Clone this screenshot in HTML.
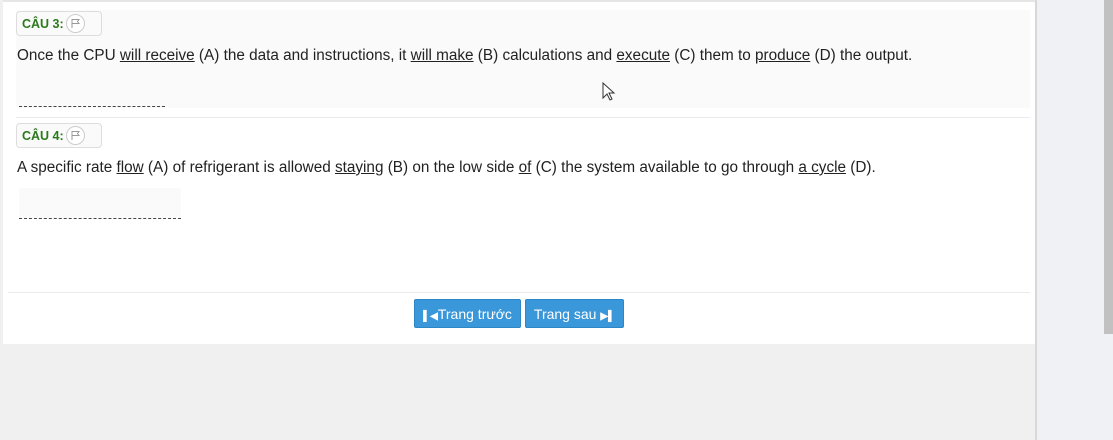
<!DOCTYPE html>
<html><head><meta charset="utf-8"><style>
*{margin:0;padding:0;box-sizing:border-box}
body{width:1113px;height:440px;background:#f0f0f0;font-family:"Liberation Sans",Arial,sans-serif;position:relative;overflow:hidden}
.gut{position:absolute;left:1035px;top:0;width:78px;height:440px;background:#f0f1f4;border-left:2px solid #d8d8d8}
.sb{position:absolute;left:1104px;top:0;width:9px;height:334px;background:#c1c1c1}
.panel{position:absolute;left:3px;top:0;width:1032px;height:344px;background:#fff;border-top:2px solid #e6e6e6}
.abs{position:absolute}
.badge{position:absolute;left:16px;width:86px;height:25px;border:1px solid #ddd;border-radius:4px;background:#fafafa;font:bold 12.5px "Liberation Sans",sans-serif;color:#2a7a1a;padding:5px 0 0 5px}
.flag{position:absolute;left:49px;top:2px;width:19px;height:19px;border:1px solid #ccc;border-radius:50%;background:#fff}
.txt{position:absolute;left:17px;font-size:15.3px;color:#222;white-space:nowrap}
.dash{position:absolute;height:1px;border-top:1px dashed #444}
.btn{position:absolute;top:299px;height:29px;background:#3a97d9;border:1px solid #2d86c6;border-radius:2px;color:#fff;font-size:14px;padding-top:6px;text-align:center}
.btn b{font-size:10px;font-weight:bold}
</style></head><body>
<div class="gut"></div><div class="sb"></div>
<div class="panel"></div>
<div class="abs" style="left:16px;top:10px;width:1014px;height:98px;background:#fafafa"></div>
<div class="badge" style="top:11px">CÂU 3:<span class="flag"><svg width="17" height="17" viewBox="0 0 17 17"><path d="M5 4v9M5 4.5h7l-1.5 2 1.5 2H5" fill="none" stroke="#999" stroke-width="1"/></svg></span></div>
<div class="txt" style="top:47px">Once the CPU <u>will receive</u> (A) the data and instructions, it <u>will make</u> (B) calculations and <u>execute</u> (C) them to <u>produce</u> (D) the output.</div>
<div class="dash" style="left:19px;top:106px;width:146px"></div>
<div class="abs" style="left:16px;top:117px;width:1014px;height:1px;background:#ebebf0"></div>
<div class="badge" style="top:123px">CÂU 4:<span class="flag"><svg width="17" height="17" viewBox="0 0 17 17"><path d="M5 4v9M5 4.5h7l-1.5 2 1.5 2H5" fill="none" stroke="#999" stroke-width="1"/></svg></span></div>
<div class="txt" style="top:159px">A specific rate <u>flow</u> (A) of refrigerant is allowed <u>staying</u> (B) on the low side <u>of</u> (C) the system available to go through <u>a cycle</u> (D).</div>
<div class="abs" style="left:19px;top:188px;width:162px;height:30px;background:#fafafa"></div>
<div class="dash" style="left:19px;top:218px;width:162px"></div>
<div class="abs" style="left:8px;top:292px;width:1022px;height:1px;background:#ebebeb"></div>
<div class="btn" style="left:414px;width:107px"><b>▌◀</b>Trang trước</div>
<div class="btn" style="left:525px;width:99px">Trang sau <b>▶▌</b></div>
<svg class="abs" style="left:602px;top:82px" width="14" height="20" viewBox="0 0 14 20"><path d="M1 1v15l4-4 3 6 2-1-3-6h5z" fill="#fff" stroke="#333" stroke-width="1"/></svg>
</body></html>
